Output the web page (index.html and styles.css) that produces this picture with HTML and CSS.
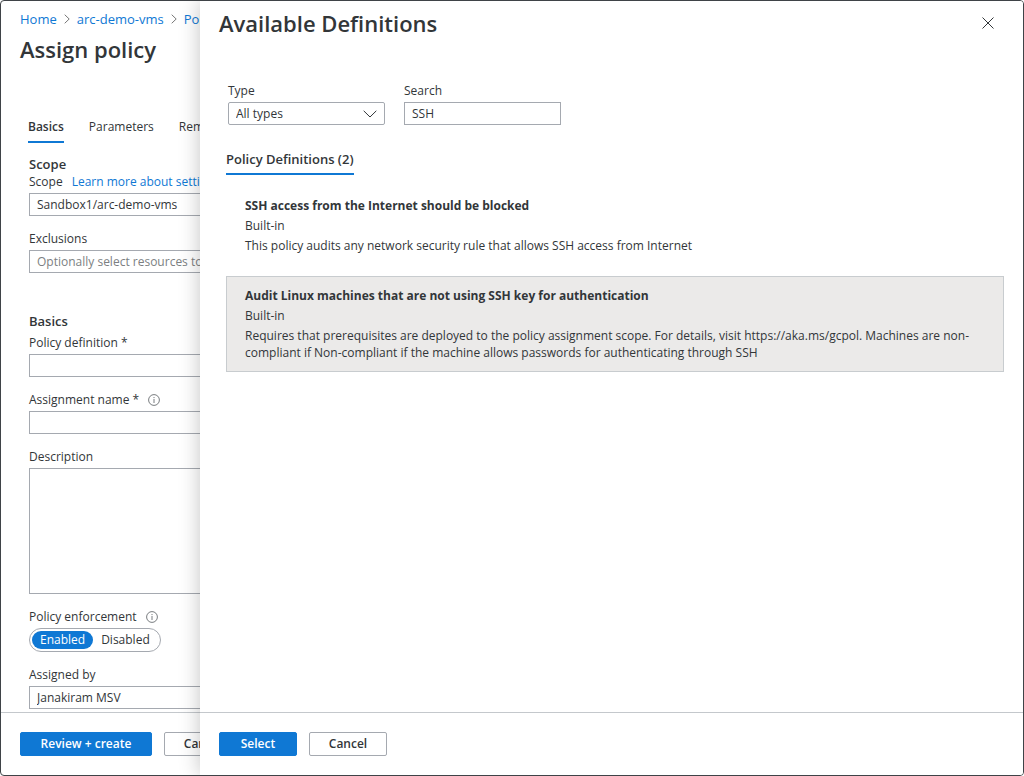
FILE: index.html
```html
<!DOCTYPE html>
<html lang="en">
<head>
<meta charset="utf-8">
<meta name="viewport" content="width=device-width, initial-scale=1">
<title>Assign policy</title>
<link rel="stylesheet" href="styles.css">
</head>
<body>
<div class="app">
  <main class="blade">
    <nav class="breadcrumb" aria-label="Breadcrumb">
      <a href="#">Home</a>
      <svg class="crumb-arrow" viewBox="0 0 6 10" aria-hidden="true"><path d="M0.7 0.7 5.2 5 0.7 9.3"/></svg>
      <a href="#">arc-demo-vms</a>
      <svg class="crumb-arrow" viewBox="0 0 6 10" aria-hidden="true"><path d="M0.7 0.7 5.2 5 0.7 9.3"/></svg>
      <a href="#">Policy</a>
    </nav>
    <h1 class="blade-title">Assign policy</h1>
    <div class="tabs" role="tablist">
      <button class="tab tab-active" role="tab" aria-selected="true">Basics</button>
      <button class="tab" role="tab">Parameters</button>
      <button class="tab" role="tab">Remediation</button>
    </div>
    <form class="form">
      <section class="section">
        <h2 class="section-title">Scope</h2>
        <div class="fields">
          <div class="field">
            <div class="label-row"><label for="scope">Scope</label><a href="#">Learn more about setting scope</a></div>
            <input class="box" id="scope" type="text" value="Sandbox1/arc-demo-vms">
          </div>
          <div class="field">
            <label class="label-row" for="exclusions">Exclusions</label>
            <input class="box" id="exclusions" type="text" placeholder="Optionally select resources to exclude">
          </div>
        </div>
      </section>
      <section class="section section-basics">
        <h2 class="section-title">Basics</h2>
        <div class="fields">
          <div class="field">
            <label class="label-row" for="definition">Policy definition *</label>
            <input class="box" id="definition" type="text">
          </div>
          <div class="field">
            <div class="label-row"><label for="name">Assignment name *</label>
              <svg class="info" viewBox="0 0 12 12" aria-hidden="true"><circle cx="6" cy="6" r="5.4"/><path d="M6 5v4M6 3v1.1"/></svg></div>
            <input class="box" id="name" type="text">
          </div>
          <div class="field">
            <label class="label-row" for="description">Description</label>
            <textarea class="box box-tall" id="description"></textarea>
          </div>
          <div class="field">
            <div class="label-row"><span id="enforcement">Policy enforcement</span>
              <svg class="info" viewBox="0 0 12 12" aria-hidden="true"><circle cx="6" cy="6" r="5.4"/><path d="M6 5v4M6 3v1.1"/></svg></div>
            <div class="toggle" role="group" aria-labelledby="enforcement">
              <button class="toggle-option toggle-on" type="button" aria-pressed="true">Enabled</button>
              <button class="toggle-option" type="button" aria-pressed="false">Disabled</button>
            </div>
          </div>
          <div class="field">
            <label class="label-row" for="assigned">Assigned by</label>
            <input class="box" id="assigned" type="text" value="Janakiram MSV">
          </div>
        </div>
      </section>
    </form>
    <footer class="actions">
      <button class="button button-primary button-wide" type="button">Review + create</button>
      <button class="button" type="button">Cancel</button>
    </footer>
  </main>

  <aside class="panel" aria-labelledby="panel-title">
    <header class="panel-header">
      <h2 class="panel-title" id="panel-title">Available Definitions</h2>
      <button class="close" type="button" aria-label="Close">
        <svg viewBox="0 0 12 12" aria-hidden="true"><path d="M0.5 0.5 11.5 11.5M11.5 0.5 0.5 11.5"/></svg>
      </button>
    </header>
    <div class="panel-body">
      <div class="filters">
        <div class="filter">
          <label for="type">Type</label>
          <div class="select-wrap">
            <select class="box select" id="type"><option>All types</option></select>
            <svg class="chevron" viewBox="0 0 14 8" aria-hidden="true"><path d="M0.7 0.8 7 7 13.3 0.8"/></svg>
          </div>
        </div>
        <div class="filter">
          <label for="search">Search</label>
          <input class="box" id="search" type="text" value="SSH">
        </div>
      </div>
      <div class="panel-tabs" role="tablist">
        <button class="tab tab-active" role="tab" aria-selected="true">Policy Definitions (2)</button>
      </div>
      <ul class="results">
        <li class="result">
          <h3 class="result-title">SSH access from the Internet should be blocked</h3>
          <p class="result-kind">Built-in</p>
          <p class="result-text">This policy audits any network security rule that allows SSH access from Internet</p>
        </li>
        <li class="result result-selected">
          <h3 class="result-title">Audit Linux machines that are not using SSH key for authentication</h3>
          <p class="result-kind">Built-in</p>
          <p class="result-text">Requires that prerequisites are deployed to the policy assignment scope. For details, visit https://aka.ms/gcpol. Machines are non-compliant if Non-compliant if the machine allows passwords for authenticating through SSH</p>
        </li>
      </ul>
    </div>
    <footer class="actions">
      <button class="button button-primary" type="button">Select</button>
      <button class="button" type="button">Cancel</button>
    </footer>
  </aside>
</div>
</body>
</html>
```
FILE: styles.css
```css
* { box-sizing: border-box; }

body {
  margin: 0;
  background: #fff;
  color: #323639;
  font: 12px/18px "Open Sans", "Noto Sans", sans-serif;
}

h1, h2, h3, p, ul { margin: 0; padding: 0; }
button, input, select, textarea { font: inherit; color: inherit; }
a { color: #0f78d4; text-decoration: none; }

.app {
  position: relative;
  height: 100vh;
  border: 1px solid #3f4347;
  border-radius: 4px;
  overflow: hidden;
}

.blade { display: flex; flex-direction: column; height: 100%; }

.breadcrumb {
  display: flex;
  align-items: center;
  gap: 7px;
  padding: 9px 19px 0;
  font-size: 13px;
}
.crumb-arrow { width: 6px; height: 10px; fill: none; stroke: #777; }

.blade-title {
  padding: 5px 19px 0;
  font-size: 22px;
  line-height: 32px;
  font-weight: 600;
}

.tabs { display: flex; gap: 25px; padding: 53px 27px 0; }
.tab {
  padding: 0 0 5px;
  border: 0;
  border-bottom: 2px solid transparent;
  background: none;
  white-space: nowrap;
}
.tab-active { border-color: #0f78d4; font-weight: 600; }

.form {
  flex: 1;
  min-height: 0;
  overflow: hidden;
  padding: 12px 28px 0;
}
.section-title { font-size: 13px; line-height: 18px; font-weight: 600; }
.section-basics { margin-top: 39px; }
.section-basics .section-title { margin-bottom: 4px; }
.fields { display: flex; flex-direction: column; gap: 14px; }
.field { display: flex; flex-direction: column; align-items: flex-start; gap: 2px; }
.label-row { display: flex; align-items: center; gap: 9px; }
.info { width: 12px; height: 12px; fill: none; stroke: #6a6e72; stroke-width: 0.9; }

.box {
  width: 100%;
  height: 23px;
  padding: 0 7px;
  border: 1px solid #a5a9b0;
  border-radius: 0;
  background: #fff;
}
.box::placeholder { color: #7c7f82; opacity: 1; }
.box-tall { display: block; height: 126px; resize: none; }

.toggle {
  display: flex;
  height: 24px;
  padding: 2px;
  border: 1px solid #a5a9b0;
  border-radius: 12px;
}
.toggle-option {
  padding: 0 8px;
  border: 0;
  border-radius: 9px;
  background: none;
  line-height: 18px;
}
.toggle-on { background: #0f78d4; color: #fff; }

.actions {
  display: flex;
  gap: 12px;
  padding: 19px;
  border-top: 1px solid #c4c8cc;
}
.button {
  width: 78px;
  height: 24px;
  padding: 0;
  border: 1px solid #a5a9b0;
  border-radius: 2px;
  background: #fff;
  font-weight: 600;
}
.button-primary { border-color: #0f78d4; background: #0f78d4; color: #fff; }
.button-wide { width: 132px; }

.panel {
  position: absolute;
  inset: 0 0 0 199px;
  display: flex;
  flex-direction: column;
  background: #fff;
  box-shadow: 0 0 20px rgba(0, 0, 0, 0.24);
}
.panel-header {
  display: flex;
  align-items: center;
  justify-content: space-between;
  padding: 6px 29px 0 19px;
}
.panel-title { font-size: 22px; line-height: 32px; font-weight: 600; }
.close { display: flex; padding: 0; border: 0; background: none; }
.close svg { width: 12px; height: 12px; fill: none; stroke: #323639; }

.panel-body { flex: 1; min-height: 0; overflow: hidden; padding: 43px 19px 0 26px; }
.filters { display: flex; gap: 19px; padding-left: 2px; }
.filter { display: flex; flex-direction: column; gap: 2px; width: 157px; }
.select-wrap { display: grid; align-items: center; }
.select { grid-area: 1 / 1; appearance: none; border-radius: 2px; }
.chevron {
  grid-area: 1 / 1;
  justify-self: end;
  width: 14px;
  height: 8px;
  margin-right: 8px;
  fill: none;
  stroke: #323639;
  pointer-events: none;
}
.panel-tabs { display: flex; padding-top: 25px; font-size: 13px; }

.results { display: flex; flex-direction: column; gap: 11px; padding-top: 11px; list-style: none; }
.result { padding: 9px 18px 10px; border: 1px solid transparent; }
.result-selected { border-color: #c8cccf; background: #ebeae9; }
.result-title { font-size: 12px; line-height: 20px; font-weight: 700; }
.result-kind { line-height: 20px; }
.result-text { padding-top: 1px; line-height: 17px; }
```
